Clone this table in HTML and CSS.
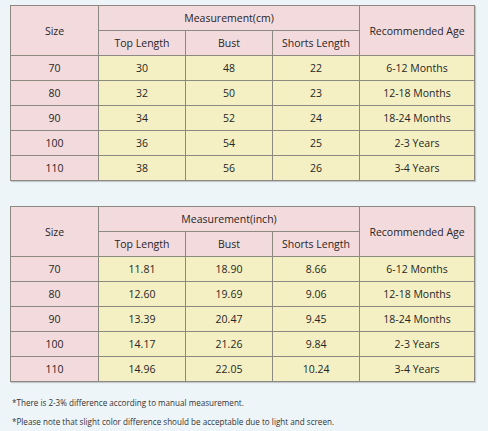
FILE: index.html
```html
<!doctype html>
<html lang="en">
<head>
  <meta charset="utf-8" />
  <meta name="viewport" content="width=device-width,initial-scale=1" />
  <title>Size Chart</title>
  <link rel="stylesheet" href="styles.css">
</head>
<body>
  <div class="wrap">
    <table class="chart">
      <colgroup>
        <col class="c-size"><col class="c-m"><col class="c-m"><col class="c-m"><col class="c-age">
      </colgroup>
      <tr class="head">
        <th rowspan="2">Size</th>
        <th colspan="3">Measurement(cm)</th>
        <th rowspan="2">Recommended Age</th>
      </tr>
      <tr class="head">
        <th>Top Length</th><th>Bust</th><th>Shorts Length</th>
      </tr>
      <tr><th>70</th><td>30</td><td>48</td><td>22</td><td>6-12 Months</td></tr>
      <tr><th>80</th><td>32</td><td>50</td><td>23</td><td>12-18 Months</td></tr>
      <tr><th>90</th><td>34</td><td>52</td><td>24</td><td>18-24 Months</td></tr>
      <tr><th>100</th><td>36</td><td>54</td><td>25</td><td>2-3 Years</td></tr>
      <tr><th>110</th><td>38</td><td>56</td><td>26</td><td>3-4 Years</td></tr>
    </table>

    <table class="chart">
      <colgroup>
        <col class="c-size"><col class="c-m"><col class="c-m"><col class="c-m"><col class="c-age">
      </colgroup>
      <tr class="head">
        <th rowspan="2">Size</th>
        <th colspan="3">Measurement(inch)</th>
        <th rowspan="2">Recommended Age</th>
      </tr>
      <tr class="head">
        <th>Top Length</th><th>Bust</th><th>Shorts Length</th>
      </tr>
      <tr><th>70</th><td>11.81</td><td>18.90</td><td>8.66</td><td>6-12 Months</td></tr>
      <tr><th>80</th><td>12.60</td><td>19.69</td><td>9.06</td><td>12-18 Months</td></tr>
      <tr><th>90</th><td>13.39</td><td>20.47</td><td>9.45</td><td>18-24 Months</td></tr>
      <tr><th>100</th><td>14.17</td><td>21.26</td><td>9.84</td><td>2-3 Years</td></tr>
      <tr><th>110</th><td>14.96</td><td>22.05</td><td>10.24</td><td>3-4 Years</td></tr>
    </table>

    <div class="notes">
      <p>*There is 2-3% difference according to manual measurement.</p>
      <p>*Please note that slight color difference should be acceptable due to light and screen.</p>
    </div>
  </div>
</body>
</html>
```

FILE: styles.css
```css
:root{--bg:#eef5f9;--pink:#f3dadd;--yellow:#f4f0c3;--line:#8c8a80;--ink:#262626}
html,body{margin:0;background:var(--bg)}
body{font-family:"Open Sans","DejaVu Sans",Arial,sans-serif;color:var(--ink)}
.wrap{padding:5px 0 0 10px}
.chart{border-collapse:collapse;table-layout:fixed;width:464px;margin-bottom:25px;box-shadow:1px 1px 1px rgba(0,0,0,0.18)}
.chart:last-of-type{margin-bottom:0}
.c-size{width:88px}
.c-m{width:87px}
.c-age{width:115px}
.chart th,.chart td{border:1px solid var(--line);height:24px;padding:0;text-align:center;vertical-align:middle;font-size:10.5px;font-weight:normal;line-height:12px}
.chart th{background:var(--pink)}
.chart td{background:var(--yellow)}
.notes{padding:14px 0 0 2px}
.notes p{margin:0 0 6px;font-size:8.1px;line-height:13px;color:#333}
```
